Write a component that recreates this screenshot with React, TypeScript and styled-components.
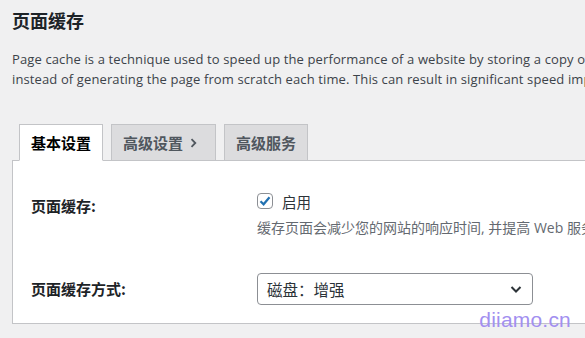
import React from "react";
import styled, { createGlobalStyle } from "styled-components";

const Global = createGlobalStyle`
  html, body { margin: 0; padding: 0; background: #f0f0f1; }
  body {
    font-family: "Segoe UI", "Open Sans", "Noto Sans CJK SC", sans-serif;
    color: #3c434a;
    overflow: hidden;
    width: 585px;
    height: 338px;
  }
`;

const Page = styled.div`
  position: relative;
  padding: 8px 0 0 12px;
  width: 585px;
  height: 338px;
  box-sizing: border-box;
  overflow: hidden;
`;

const Title = styled.h2`
  margin: 0;
  font-size: 18px;
  line-height: 24px;
  font-weight: 700;
  color: #1d2327;
  font-family: "Noto Sans CJK SC", sans-serif;
`;

const Intro = styled.p`
  margin: 17px 0 0;
  font-size: 13px;
  line-height: 20px;
  letter-spacing: 0.12px;
  white-space: nowrap;
  color: #3c434a;
`;

const Tabs = styled.nav`
  display: flex;
  gap: 8px;
  margin: 35px 0 0 7px;
  position: relative;
  z-index: 1;
`;

const Tab = styled.div<{ $active?: boolean }>`
  box-sizing: border-box;
  height: ${(p) => (p.$active ? "37px" : "36px")};
  padding: 0 11px;
  display: flex;
  align-items: center;
  font-family: "Noto Sans CJK SC", sans-serif;
  font-size: 15px;
  font-weight: 700;
  border: 1px solid #c3c4c7;
  border-bottom: ${(p) => (p.$active ? "1px solid #fff" : "none")};
  background: ${(p) => (p.$active ? "#fff" : "#dcdcde")};
  color: ${(p) => (p.$active ? "#000" : "#50575e")};
  gap: 7px;
  margin-bottom: ${(p) => (p.$active ? "-1px" : "0")};
  padding-bottom: ${(p) => (p.$active ? "1px" : "0")};
`;

const Panel = styled.div`
  box-sizing: border-box;
  width: 600px;
  height: 164px;
  background: #fff;
  border: 1px solid #c3c4c7;
  padding: 31px 0 0 18px;
  display: grid;
  grid-template-columns: 226px 1fr;
  grid-template-rows: auto auto;
  row-gap: 18px;
`;

const Label = styled.div<{ $top: number }>`
  font-family: "Noto Sans CJK SC", sans-serif;
  font-size: 15px;
  font-weight: 700;
  color: #1d2327;
  padding-top: ${(p) => p.$top}px;
  line-height: 20px;
`;

const Field = styled.div`
  display: flex;
  flex-direction: column;
`;

const CheckRow = styled.label`
  display: flex;
  align-items: center;
  gap: 9px;
  font-family: "Noto Sans CJK SC", sans-serif;
  font-size: 14.5px;
  color: #2c3338;
  height: 18px;
`;

const Box = styled.span`
  box-sizing: border-box;
  width: 16px;
  height: 16px;
  border: 1px solid #8c8f94;
  border-radius: 4px;
  display: flex;
  align-items: center;
  justify-content: center;
  background: #fff;
`;

const Hint = styled.div`
  margin-top: 9px;
  font-family: "Segoe UI", "Open Sans", "Noto Sans CJK SC", sans-serif;
  font-size: 14px;
  line-height: 18px;
  color: #646970;
  white-space: nowrap;
`;

const Select = styled.div`
  box-sizing: border-box;
  width: 276px;
  height: 32px;
  border: 1px solid #8c8f94;
  border-radius: 4px;
  display: flex;
  align-items: center;
  justify-content: space-between;
  padding: 0 8px 0 9px;
  font-family: "Noto Sans CJK SC", sans-serif;
  font-size: 15.5px;
  color: #2c3338;
`;

const Watermark = styled.div`
  position: absolute;
  right: 14px;
  bottom: 6px;
  font-family: "Liberation Sans", Arial, sans-serif;
  font-size: 21px;
  color: #a28ff0;
  letter-spacing: 0.2px;
`;

export default function App() {
  return (
    <>
      <Global />
      <Page>
        <Title>页面缓存</Title>
        <Intro>
          Page cache is a technique used to speed up the performance of a website by storing a copy of
          <br />
          instead of generating the page from scratch each time. This can result in significant speed improvements
        </Intro>
        <Tabs>
          <Tab $active>基本设置</Tab>
          <Tab>
            高级设置
            <svg width="14" height="12" viewBox="0 0 14 12">
              <path d="M1.5 2.2 L5.3 6 L1.5 9.8" fill="none" stroke="#50575e" strokeWidth="1.8" />
            </svg>
          </Tab>
          <Tab>高级服务</Tab>
        </Tabs>
        <Panel>
          <Label $top={4}>页面缓存:</Label>
          <Field>
            <CheckRow>
              <Box>
                <svg width="14" height="14" viewBox="0 0 14 14">
                  <path d="M2.5 7.2 L5.6 10.3 L11.5 3.2" fill="none" stroke="#2271b1" strokeWidth="2.2" />
                </svg>
              </Box>
              启用
            </CheckRow>
            <Hint>缓存页面会减少您的网站的响应时间, 并提高 Web 服务器的性能</Hint>
          </Field>
          <Label $top={6}>页面缓存方式:</Label>
          <Field>
            <Select>
              <span>磁盘：增强</span>
              <svg width="16" height="16" viewBox="0 0 16 16">
                <path d="M3.5 6 L8 10.5 L12.5 6" fill="none" stroke="#2c3338" strokeWidth="2" />
              </svg>
            </Select>
          </Field>
        </Panel>
        <Watermark>diiamo.cn</Watermark>
      </Page>
    </>
  );
}
